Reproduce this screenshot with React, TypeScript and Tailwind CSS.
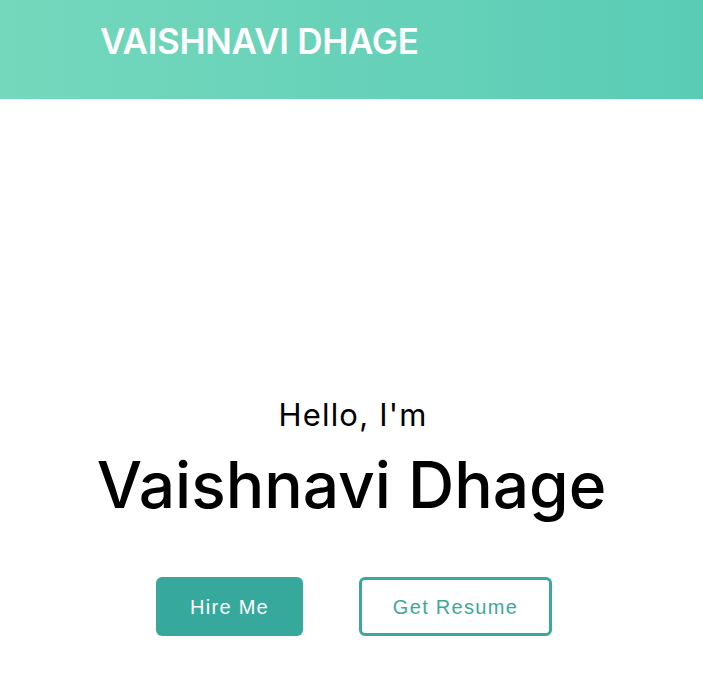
export default function App() {
  return (
    <div className="min-h-screen bg-white">
      <header className="h-[99px] bg-gradient-to-r from-[#74d8bc] to-[#5accb6] flex items-start pt-[24px] pl-[100px]">
        <h1 className="text-white font-[Inter,sans-serif] font-semibold text-[35px] tracking-[-0.3px] leading-none">VAISHNAVI DHAGE</h1>
      </header>
      <section className="flex flex-col items-center pt-[300px]">
        <p className="font-[Inter,sans-serif] text-[31px] leading-none tracking-[1.2px] text-black pl-[3px]">Hello, I'm</p>
        <h2 className="mt-[23px] font-[Inter,sans-serif] font-medium text-[64px] leading-none text-black">Vaishnavi Dhage</h2>
        <div className="mt-[60px] flex gap-[56px] pl-[5px]">
          <button className="w-[147px] h-[59px] rounded-[6px] bg-[#36a99c] text-white font-['Liberation_Sans',Arial,sans-serif] text-[20px] tracking-[1.3px]">Hire Me</button>
          <button className="w-[193px] h-[59px] rounded-[6px] border-[3px] border-[#3aa99b] bg-white text-[#3aa99b] font-['Liberation_Sans',Arial,sans-serif] text-[20px] tracking-[1.3px]">Get Resume</button>
        </div>
      </section>
    </div>
  );
}
